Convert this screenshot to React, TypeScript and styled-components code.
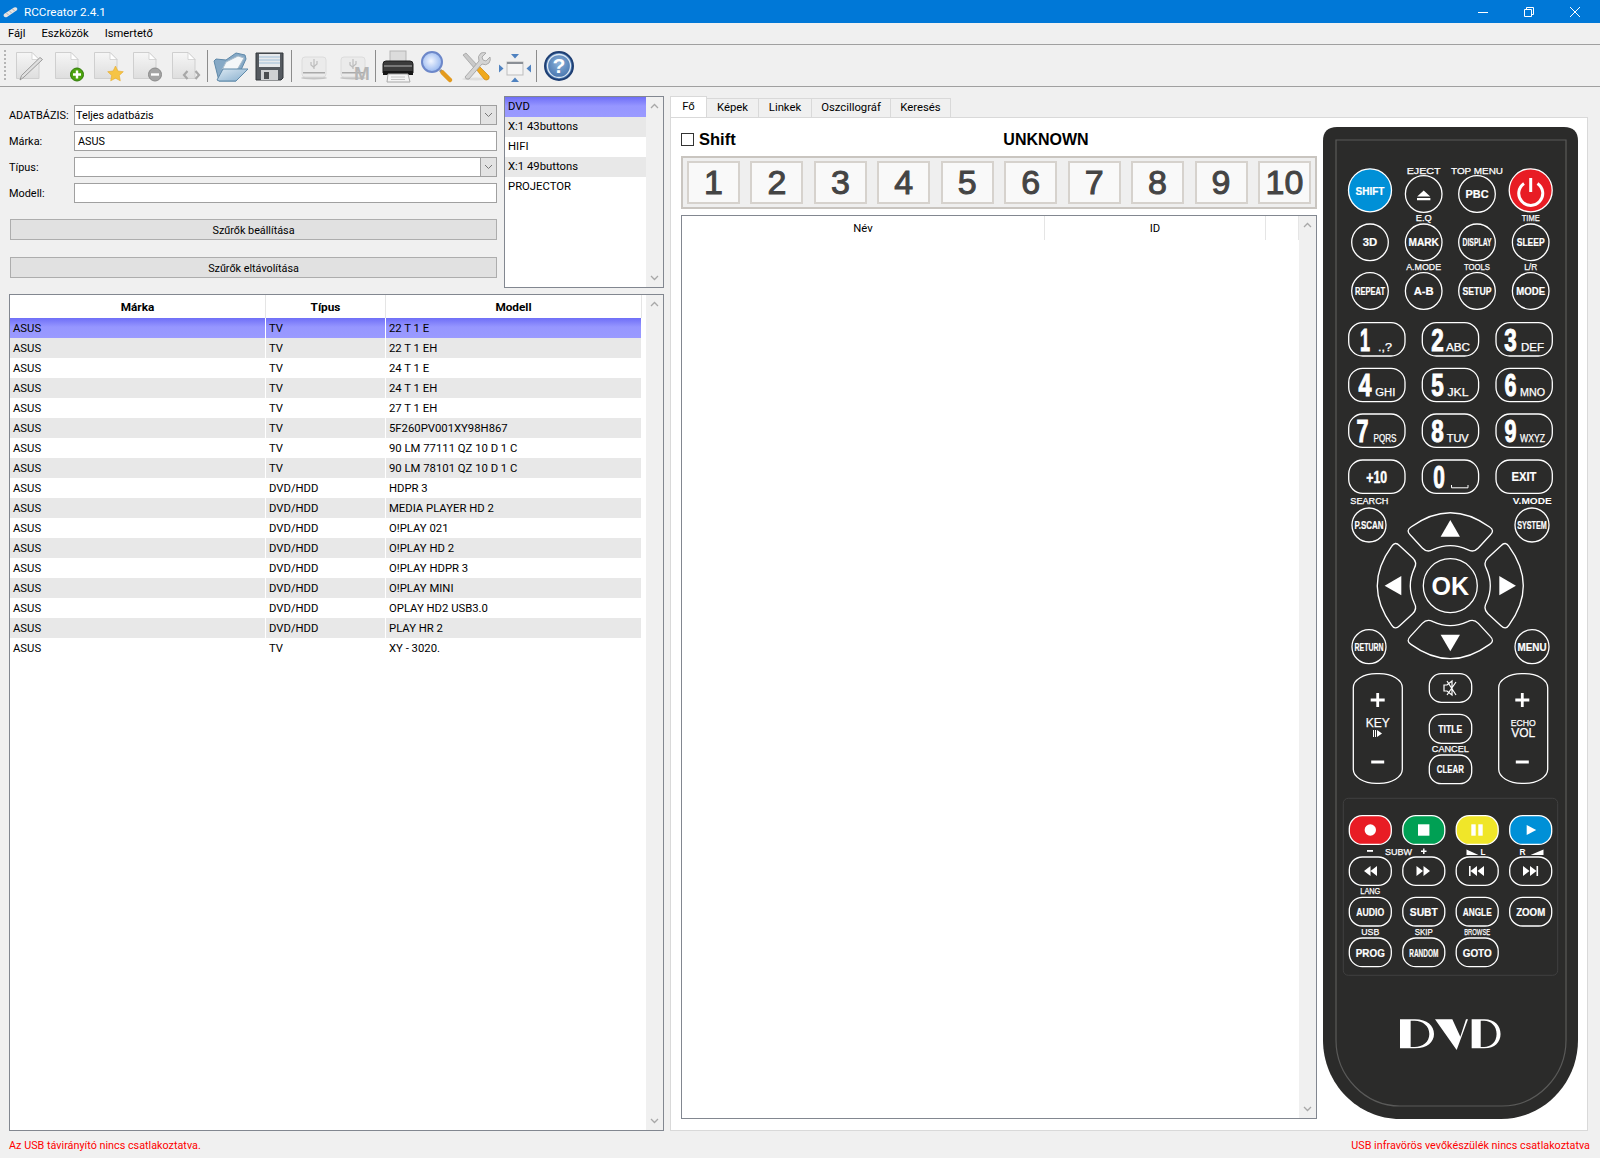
import React from 'react'
import styled, { createGlobalStyle } from 'styled-components'

const Global = createGlobalStyle`
    html, body {
        margin: 0;
        padding: 0;
        background: #f0f0f0;
    }
    * {
        box-sizing: border-box;
    }
`
const Window = styled.div`
    width: 1600px;
    height: 1158px;
    display: flex;
    flex-direction: column;
    overflow: hidden;
    background: #f0f0f0;
    color: #000;
    font-family: Roboto, "Liberation Sans", sans-serif;
    font-size: 11.3px;
`
const TitleBar = styled.div`
    height: 23px;
    flex: none;
    background: #0078d7;
    color: #fff;
    display: flex;
    align-items: center;
    padding: 0 2px 0 3px;
`
const TitleText = styled.span`
    margin-left: 6px;
    font-size: 11.7px;
    flex: 1;
`
const WinButton = styled.div`
    width: 46px;
    height: 23px;
    display: flex;
    align-items: center;
    justify-content: center;
`
const MenuBar = styled.div`
    height: 22px;
    flex: none;
    display: flex;
    align-items: center;
    padding: 0 8px;
    gap: 16px;
    border-bottom: 1px solid #a0a0a0;
    font-size: 11.2px;
`
const ToolBar = styled.div`
    height: 42px;
    flex: none;
    display: flex;
    align-items: center;
    padding-left: 4px;
    border-bottom: 1px solid #a0a0a0;
`
const Grip = styled.div`
    width: 2px;
    height: 32px;
    margin-right: 4px;
    background: repeating-linear-gradient(#b5b5b5 0 2px, transparent 2px 4px);
`
const ToolButton = styled.div`
    width: 39px;
    height: 36px;
    flex: none;
    display: flex;
    align-items: center;
    justify-content: center;
`
const ToolSep = styled.div<{ $m: number }>`
    width: 1px;
    height: 32px;
    flex: none;
    background: #8c8c8c;
    margin: 0 ${p => p.$m}px 0 ${p => p.$m}px;
`
const Main = styled.div`
    flex: 1;
    display: flex;
    min-height: 0;
    padding-top: 9px;
`
const LeftPane = styled.div`
    width: 664px;
    flex: none;
    display: flex;
    flex-direction: column;
    padding: 0 0 3px 9px;
`
const Top = styled.div`
    display: flex;
    gap: 7px;
    height: 192px;
    flex: none;
`
const Form = styled.div`
    width: 488px;
    flex: none;
    padding-top: 9px;
`
const Fields = styled.div`
    display: grid;
    grid-template-columns: 65px 1fr;
    grid-auto-rows: 20px;
    row-gap: 6px;
    align-items: center;
`
const FieldLabel = styled.span`
    font-size: 10.9px;
`
const Input = styled.div`
    height: 20px;
    background: #fff;
    border: 1px solid #a0a0a0;
    display: flex;
    align-items: center;
    padding: 1px 0 0 3px;
    font-size: 10.8px;
    position: relative;
`
const ComboInput = styled(Input)`
    padding: 0 0 0 1px;
`
const ComboArrow = styled.div`
    position: absolute;
    right: 0;
    top: 0;
    bottom: 0;
    width: 16px;
    background: #e3e3e3;
    border-left: 1px solid #a0a0a0;
    display: flex;
    align-items: center;
    justify-content: center;
`
const FilterButton = styled.div<{ $top: number }>`
    height: 21px;
    margin: ${p => p.$top}px 0 0 1px;
    padding-top: 1px;
    background: #e1e1e1;
    border: 1px solid #adadad;
    display: flex;
    align-items: center;
    justify-content: center;
    font-size: 10.8px;
`
const Listing = styled.div`
    flex: 1;
    display: flex;
    background: #fff;
    border: 1px solid #828790;
    min-width: 0;
`
const ListBody = styled.div`
    flex: 1;
`
const ListRow = styled.div<{ $selected?: boolean; $alt?: boolean }>`
    height: 20px;
    padding: 0 0 2px 3px;
    display: flex;
    align-items: center;
    background: ${p => p.$selected ? 'linear-gradient(#6f6ff7, #9696ff 45%, #9a9aff)' : p.$alt ? '#e8e8e8' : '#fff'};
`
const Scroll = styled.div`
    width: 17px;
    flex: none;
    background: #f0f0f0;
    display: flex;
    flex-direction: column;
    justify-content: space-between;
    align-items: center;
    padding: 6px 0;
`
const DataTable = styled.div`
    margin-top: 6px;
    flex: 1;
    display: flex;
    background: #fff;
    border: 1px solid #828790;
    min-height: 0;
`
const TableBody = styled.div`
    flex: 1;
    padding-right: 4px;
`
const HeadRow = styled.div`
    height: 23px;
    display: grid;
    grid-template-columns: 256px 120px 1fr;
`
const HeadCell = styled.div`
    display: flex;
    align-items: center;
    justify-content: center;
    font-weight: bold;
    font-size: 11.8px;
    border-right: 1px solid #e5e5e5;
`
const Row = styled.div<{ $selected?: boolean; $alt?: boolean }>`
    height: 20px;
    display: grid;
    grid-template-columns: 256px 120px 1fr;
    background: ${p => p.$selected ? 'linear-gradient(#6f6ff7, #9696ff 45%, #9a9aff)' : p.$alt ? '#e8e8e8' : '#fff'};
`
const Cell = styled.div`
    display: flex;
    align-items: center;
    padding-left: 3px;
    border-right: 1px solid #fff;
`
const RightPane = styled.div`
    width: 918px;
    margin-left: 6px;
    flex: none;
    display: flex;
    flex-direction: column;
    padding-bottom: 3px;
`
const Tabs = styled.div`
    height: 21px;
    flex: none;
    display: flex;
    align-items: flex-end;
`
const Tab = styled.div<{ $active?: boolean; $w: number }>`
    width: ${p => p.$w}px;
    height: ${p => p.$active ? 21 : 19}px;
    display: flex;
    align-items: center;
    justify-content: center;
    padding-bottom: 1px;
    background: ${p => p.$active ? '#fff' : '#f0f0f0'};
    border: 1px solid #d9d9d9;
    border-bottom: none;
    border-left: ${p => p.$active ? '1px solid #d9d9d9' : 'none'};
`
const Panel = styled.div`
    flex: 1;
    background: #fff;
    border: 1px solid #d9d9d9;
    display: flex;
    min-height: 0;
    padding: 0 0 11px 10px;
`
const Work = styled.div`
    width: 636px;
    flex: none;
    display: flex;
    flex-direction: column;
    padding-top: 11px;
`
const ShiftRow = styled.div`
    height: 21px;
    flex: none;
    display: grid;
    grid-template-columns: 94px 1fr;
    align-items: center;
    font-family: "Liberation Sans", sans-serif;
    font-weight: bold;
    font-size: 16.5px;
`
const ShiftLabel = styled.div`
    display: flex;
    align-items: center;
    gap: 5px;
`
const Check = styled.div`
    width: 13px;
    height: 13px;
    border: 1px solid #333;
    background: #fff;
`
const Unknown = styled.div`
    text-align: center;
    font-size: 16px;
`
const Strip = styled.div`
    height: 53px;
    flex: none;
    margin-top: 6px;
    border: 2px solid #c9c5c0;
    background: #efefef;
    padding: 0 4px;
    display: flex;
    align-items: center;
    justify-content: space-between;
`
const KeyButton = styled.div`
    width: 53px;
    height: 43px;
    padding-bottom: 1px;
    background: #f9f9f9;
    border: 2px solid #d6d2cd;
    display: flex;
    align-items: center;
    justify-content: center;
    font-family: "Liberation Sans", sans-serif;
    font-size: 34px;
    -webkit-text-stroke: 1px #444;
    color: #444;
`
const KeyTable = styled.div`
    flex: 1;
    margin-top: 6px;
    display: flex;
    border: 1px solid #828790;
    min-height: 0;
`
const KeyBody = styled.div`
    flex: 1;
    min-width: 0;
`
const KeyHead = styled.div`
    height: 24px;
    display: grid;
    grid-template-columns: 363px 221px 1fr;
`
const KeyHeadCell = styled.div`
    display: flex;
    align-items: center;
    justify-content: center;
    border-right: 1px solid #e5e5e5;
`
const RemoteWrap = styled.div`
    margin: 9px 0 0 6px;
    flex: none;
`
const Status = styled.div`
    height: 24px;
    flex: none;
    display: flex;
    align-items: center;
    justify-content: space-between;
    padding: 0 10px 2px 9px;
    color: #f00;
    font-size: 10.8px;
`

const Chevron = ({ down }: { down?: boolean }) => (
    <svg width="9" height="6" viewBox="0 0 9 6">
        <path d={down ? 'M1 1l3.500 3.500L8 1' : 'M1 5l3.500-3.500L8 5'} fill="none" stroke="#a8a8a8" strokeWidth="1.300" />
    </svg>
)
const ComboChevron = () => (
    <svg width="9" height="6" viewBox="0 0 9 6">
        <path d="M1 1l3.500 3.500L8 1" fill="none" stroke="#777" strokeWidth="1" />
    </svg>
)
const ScrollBar = () => <Scroll><Chevron /><Chevron down /></Scroll>

const Doc = ({ children }: { children?: React.ReactNode }) => (
    <svg width="32" height="32" viewBox="0 0 32 32" overflow="visible">
        <defs>
            <linearGradient id="page" x1="0" y1="0" x2="0" y2="1">
                <stop offset="0" stopColor="#f6f6f6" />
                <stop offset="1" stopColor="#dedede" />
            </linearGradient>
        </defs>
        <path d="M2.500 2.500H18L25 9.500V28.500H2.500Z" fill="url(#page)" stroke="#cfcfcf" />
        <path d="M18 2.500V9.500H25Z" fill="#fff" stroke="#c8c8c8" strokeWidth=".7" />
        {children}
    </svg>
)
const Plain = ({ children, w = 32 }: { children: React.ReactNode; w?: number }) => (
    <svg width={w} height="32" viewBox={`0 0 ${w} 32`} overflow="visible">{children}</svg>
)
const UsbIcon = ({ m }: { m?: boolean }) => (
    <Plain>
        <ellipse cx="15" cy="28" rx="13" ry="1.500" fill="#c4c4c4" />
        <rect x="3" y="7" width="24" height="20" rx="3" fill="#ebebeb" stroke="#dcdcdc" />
        <rect x="4" y="22" width="22" height="1.500" fill="#a9a9a9" />
        <path d="M15 9v10M12 12v3l3 2.500M18 11v3l-3 2.500" fill="none" stroke="#bdbdbd" strokeWidth="1.200" />
        {m && <text x="24" y="30" textAnchor="middle" fontFamily="Liberation Sans" fontWeight="bold" fontSize="19" fill="#b5b5b5">M</text>}
    </Plain>
)

const tools: (React.ReactNode | number)[] = [
    <Doc key="n"><path d="M28.500 9.500L10 27l-4 3 1.500-4.500L26 7.500Z" fill="#e0e0e0" stroke="#9a9a9a" /></Doc>,
    <Doc key="a"><circle cx="24" cy="24.500" r="6.500" fill="#4da30f" stroke="#2f7a08" /><path d="M24 20.500v8M20 24.500h8" stroke="#fff" strokeWidth="2.400" /></Doc>,
    <Doc key="f"><path d="M23.500 16l2.400 5 5.400.7-4 3.700 1 5.400-4.800-2.600-4.800 2.600 1-5.400-4-3.700 5.400-.7Z" fill="#f6c445" stroke="#e6a92c" strokeWidth=".6" /></Doc>,
    <Doc key="r"><circle cx="24" cy="24.500" r="6.500" fill="#a4a4a4" stroke="#8a8a8a" /><path d="M20 24.500h8" stroke="#fff" strokeWidth="2.400" /></Doc>,
    <Doc key="c"><path d="M17.500 21l-3.500 4 3.500 4M25.500 21l3.500 4-3.500 4" fill="none" stroke="#a8a8a8" strokeWidth="2.200" /></Doc>,
    2,
    <Plain key="o">
        <defs>
            <linearGradient id="flap" x1="0" y1="0" x2="1" y2="1">
                <stop offset="0" stopColor="#dce9f3" />
                <stop offset="1" stopColor="#86aecd" />
            </linearGradient>
        </defs>
        <path d="M0 11l2-2 10 1L22 3l9 2 1 4-10 22H5Z" fill="#86a9c6" stroke="#5f89a9" />
        <path d="M12 12L24 6l6 2-7 12H8Z" fill="#f4f7f9" stroke="#a9bdcc" />
        <path d="M3 30L9 19h25L22 31H5Z" fill="url(#flap)" stroke="#5f89a9" />
    </Plain>,
    <Plain key="s">
        <path d="M3 3h27v25l-2 2H3Z" fill="#555a60" stroke="#33373b" />
        <rect x="6" y="4" width="21" height="13" fill="#e6e9ec" />
        <path d="M6 7h21M6 10h21M6 13h21" stroke="#9fc0d8" strokeWidth="1.200" />
        <rect x="8" y="20" width="17" height="10" fill="#cfd1d3" />
        <rect x="11" y="22" width="5" height="7" fill="#4a4d50" />
    </Plain>,
    3,
    <UsbIcon key="u" />,
    <UsbIcon key="m" m />,
    2,
    <Plain key="p">
        <rect x="8" y="1" width="16" height="12" fill="#dcdcdc" stroke="#b5b5b5" />
        <path d="M1 14q0-3 3-3h24q3 0 3 3v9H1Z" fill="#3b3b3b" stroke="#1e1e1e" />
        <rect x="2" y="15" width="28" height="2" fill="#777" />
        <rect x="1" y="21" width="30" height="4" fill="#161616" />
        <path d="M6 24h20l2 8H5Z" fill="#f4f4f4" stroke="#a8a8a8" />
        <path d="M9 27h14M9 29.500h14" stroke="#c4c4c4" />
    </Plain>,
    <Plain key="z">
        <defs>
            <radialGradient id="lens" cx=".45" cy=".45" r=".6">
                <stop offset="0" stopColor="#f2f6ff" />
                <stop offset="1" stopColor="#8fb2ee" />
            </radialGradient>
        </defs>
        <circle cx="11" cy="12" r="10" fill="url(#lens)" stroke="#6c87c9" strokeWidth="2" />
        <path d="M19 20l2 2" stroke="#8f8f8f" strokeWidth="3" />
        <path d="M21.500 22.500L29 30" stroke="#e39a1e" strokeWidth="4.500" strokeLinecap="round" />
    </Plain>,
    <Plain key="t">
        <ellipse cx="16" cy="29" rx="14" ry="1.500" fill="#dedede" />
        <path d="M3 5l3-2 12 13-3 3Z" fill="#c9c9c9" stroke="#9a9a9a" strokeWidth=".7" />
        <path d="M16 19l3-3 10 10q1 3-2 4-2 0-3-1Z" fill="#f0a91c" stroke="#c98510" strokeWidth=".7" />
        <path d="M5 27L19 11q-2-5 2-8 3-1 5 0l-4 4 1 3 3 1 4-4q1 3-1 6-3 3-7 1L9 29q-3 1-4-2Z" fill="#d4d4d4" stroke="#9d9d9d" strokeWidth=".8" />
    </Plain>,
    <Plain key="w">
        <rect x="8" y="12" width="16" height="13" fill="#f4f4f4" stroke="#bdbdbd" />
        <rect x="8" y="12" width="16" height="2" fill="#8a8f96" />
        <path d="M12 4h8l-4 4.500ZM12 32h8l-4-4.500ZM0 14.500v8l4.500-4ZM32 14.500v8l-4.500-4Z" fill="#4f82c0" />
    </Plain>,
    2,
    <Plain key="h">
        <defs>
            <radialGradient id="help" cx=".5" cy=".4" r=".7">
                <stop offset="0" stopColor="#8cb2da" />
                <stop offset="1" stopColor="#2f5f9e" />
            </radialGradient>
        </defs>
        <circle cx="16" cy="16" r="14" fill="url(#help)" stroke="#1f3f73" strokeWidth="2" />
        <circle cx="16" cy="16" r="11.500" fill="none" stroke="#dfe9f3" strokeWidth="1.300" />
        <text x="16" y="23" textAnchor="middle" fontFamily="Liberation Sans" fontWeight="bold" fontSize="21" fill="#fff">?</text>
    </Plain>,
]

type Txt = [number, number, string, number, number, boolean?]

// screen coordinates, measured from the picture: x, baseline, text, width, size, regular
const labels: Txt[] = [
    [1423.700, 173.500, 'EJECT', 34, 9.500, true], [1477, 173.500, 'TOP MENU', 52, 9.500, true], [1423.700, 221, 'E.Q', 16, 9.500, true],
    [1530.700, 221, 'TIME', 18, 9.500, true], [1423.700, 270, 'A.MODE', 35, 9.500, true], [1477, 270, 'TOOLS', 26, 9.500, true],
    [1530.700, 270, 'L/R', 13, 9.500, true], [1369.300, 504, 'SEARCH', 38, 9.500, true], [1532.300, 504, 'V.MODE', 39, 9.500],
    [1450.300, 751.500, 'CANCEL', 37, 9.500, true], [1398.500, 854.500, 'SUBW', 27, 9.500, true], [1483, 854.500, 'L', 5, 9.500],
    [1522.500, 854.500, 'R', 6, 9.500], [1370.300, 894, 'LANG', 20, 9, true], [1370.300, 935, 'USB', 18, 9.500, true],
    [1423.800, 935, 'SKIP', 18, 9.500, true], [1477.200, 935, 'BROWSE', 26, 9, true],
    [1377.700, 727, 'KEY', 24, 12.500, true], [1523.300, 726, 'ECHO', 25, 9.500, true], [1523.300, 737, 'VOL', 24, 13, true],
]
const circles: [number, number, number, string, number][] = [
    [1423.700, 194, 18.300, '', 0], [1477, 194, 18.300, 'PBC', 23], [1370, 242.300, 18.300, '3D', 14.500], [1423.700, 242.300, 18.300, 'MARK', 30.500],
    [1477, 242.300, 18.300, 'DISPLAY', 29], [1530.700, 242.300, 18.300, 'SLEEP', 28], [1370, 291, 18.300, 'REPEAT', 30], [1423.700, 291, 18.300, 'A-B', 20],
    [1477, 291, 18.300, 'SETUP', 29], [1530.700, 291, 18.300, 'MODE', 28.700], [1369, 525, 17, 'P.SCAN', 29], [1532, 525, 17, 'SYSTEM', 29.500],
    [1369, 646.700, 17, 'RETURN', 29], [1532, 646.700, 17, 'MENU', 29],
]
// column, row, digit, digit x, digit width, letters, letters width, letters x
const pads: [number, string, number, number, string, number, number][] = [
    [0, '1', 1365, 10, '.,?', 14, 1385], [0, '2', 1437.500, 12.500, 'ABC', 24, 1458], [0, '3', 1510.500, 12.500, 'DEF', 23, 1532.500],
    [1, '4', 1365, 13, 'GHI', 20, 1385.300], [1, '5', 1437.500, 12.500, 'JKL', 21, 1458], [1, '6', 1510.500, 12, 'MNO', 25, 1532.500],
    [2, '7', 1362.500, 12, 'PQRS', 23, 1385], [2, '8', 1437.500, 12.500, 'TUV', 22, 1457.700], [2, '9', 1510.500, 12, 'WXYZ', 25, 1532.500],
]
const padX = [1348.700, 1422.300, 1496]
const padY = [322.700, 368.300, 414, 460]
const smallCols = [1370.300, 1423.800, 1477.200, 1530.700]
const colours = ['#e81c24', '#00a054', '#f0e629', '#0090d7']
const textKeys: [number, number, string, number][] = [
    [0, 916, 'AUDIO', 28], [1, 916, 'SUBT', 28], [2, 916, 'ANGLE', 29], [3, 916, 'ZOOM', 29],
    [0, 956.700, 'PROG', 29], [1, 956.700, 'RANDOM', 29], [2, 956.700, 'GOTO', 29],
]

const RemoteText = styled.text<{ $heavy?: number }>`
    font-family: "Liberation Sans", Arial, sans-serif;
    fill: #fff;
    stroke: #fff;
    stroke-width: ${p => p.$heavy || 0}px;
    text-anchor: middle;
`
const Fit = ({ x, y, w, size, regular, heavy, children }: { x: number; y: number; w: number; size: number; regular?: boolean; heavy?: number; children: string }) => (
    <RemoteText x={x} y={y} textLength={w} lengthAdjust="spacingAndGlyphs" fontSize={size} fontWeight={regular ? 'normal' : 'bold'} $heavy={heavy ?? (regular ? 0.25 : 0)}>{children}</RemoteText>
)

const dpadUp = 'M-118-176Q0-262 118-176Q134-166 120-152L84-113Q70-98 52-108Q0-132-52-108Q-70-98-84-113L-120-152Q-134-166-118-176Z'
const DVD_D = 'M0 0H32V87H0ZM32 0H45C82 0 102 20 102 44C102 68 82 87 45 87H32V83H44C68 83 88 68 88 44C88 20 68 4 44 4H32Z'

const Remote = () => (
    <svg width="255" height="992" viewBox="1323 127 255 992" style={{ display: 'block' }}>
        <path d="M1337 127H1564Q1578 127 1578 141V1040C1578 1084 1543 1119 1501 1119H1400C1358 1119 1323 1084 1323 1040V141Q1323 127 1337 127Z" fill="#2b2b2a" />
        <path d="M1336 140H1566V1040C1566 1076 1537 1106 1502 1106H1400C1365 1106 1336 1076 1336 1040Z" fill="none" stroke="#5a5a59" strokeWidth="1.200" />
        <rect x="1343.300" y="798.300" width="214.400" height="177" rx="5" fill="none" stroke="#404040" />

        <g stroke="#fff" strokeWidth="1.300" fill="none">
            <circle cx="1370" cy="190.300" r="21.500" fill="#0090d7" />
            <circle cx="1530.700" cy="190.300" r="21.500" fill="#e81c24" />
            {circles.map(([x, y, r], i) => <circle key={i} cx={x} cy={y} r={r} />)}
            {padY.map(y => padX.map(x => <rect key={`${x}${y}`} x={x} y={y} width="56.300" height="33.300" rx="14" />))}
            <rect x="1353.300" y="673.700" width="49" height="109.600" rx="23" ry="14" />
            <rect x="1498.700" y="673.700" width="49" height="109.600" rx="23" ry="14" />
            <rect x="1429.300" y="673.700" width="42.400" height="28.600" rx="12" />
            <rect x="1429.300" y="714.300" width="42.400" height="29" rx="12" />
            <rect x="1429.300" y="755" width="42.400" height="28.700" rx="12" />
            <circle cx="1450.300" cy="585.700" r="27" />
            <g transform="translate(1450.300 585.700) scale(.3333)" strokeWidth="4">
                {[0, 90, 180, 270].map(a => (
                    <g key={a} transform={`rotate(${a})`}>
                        <path d={dpadUp} />
                        <path d="M0-197L29-147H-29Z" fill="#fff" stroke="none" />
                    </g>
                ))}
            </g>
            {smallCols.map((x, i) => (
                <React.Fragment key={x}>
                    <rect x={x - 21} y="815.700" width="42" height="28.700" rx="13" fill={colours[i]} />
                    <rect x={x - 21} y="857" width="42" height="28.300" rx="13" />
                    <rect x={x - 21} y="897.300" width="42" height="28.700" rx="13" />
                    {i < 3 && <rect x={x - 21} y="938" width="42" height="28.700" rx="13" />}
                </React.Fragment>
            ))}
        </g>
        <Fit x={1370} y={194.500} w={29} size={11.500} heavy={0.2}>SHIFT</Fit>
        <path d="M1524 183.500a12 12 0 1 0 13.500 0" fill="none" stroke="#fff" strokeWidth="3" />
        <path d="M1530.700 178v14" stroke="#fff" strokeWidth="3" />
        <path d="M1423.700 190.500l6.500 6h-13Z M1417 198h13.400v2.300H1417Z" fill="#fff" />

        {circles.filter(c => c[3]).map(([x, y, , t, w]) => <Fit key={t} x={x} y={y + 4} w={w} size={11} heavy={0.2}>{t}</Fit>)}
        {labels.map(([x, y, t, w, s, r]) => <Fit key={t} x={x} y={y} w={w} size={s} regular={r}>{t}</Fit>)}
        {pads.map(([r, d, dx, dw, s, sw, sx]) => (
            <React.Fragment key={d}>
                <Fit x={dx} y={padY[r] + 28} w={dw} size={32} heavy={1}>{d}</Fit>
                <Fit x={sx} y={padY[r] + 28} w={sw} size={10} regular>{s}</Fit>
            </React.Fragment>
        ))}
        <Fit x={1376.700} y={482.700} w={20.700} size={16} heavy={0.5}>+10</Fit>
        <Fit x={1439} y={488} w={11.600} size={32} heavy={1}>0</Fit>
        <path d="M1451.500 485v2.800h16.500V485" fill="none" stroke="#fff" strokeWidth="1" />
        <Fit x={1524} y={481} w={25} size={12.500} heavy={0.2}>EXIT</Fit>
        <RemoteText x="1450.300" y="594.500" fontSize="25" fontWeight="bold">OK</RemoteText>

        <path d="M1377.700 693v14M1370.700 700h14M1371.200 762h13M1522.300 693v14M1515.300 700h14M1515.800 762h13" stroke="#fff" strokeWidth="2.800" />
        <path d="M1373.500 730v7M1375.500 730v7" stroke="#fff" strokeWidth="1" />
        <path d="M1377 730l5 3.500-5 3.500Z" fill="#fff" />
        <path d="M1444 685v6h3l5 4v-14l-5 4h-3ZM1447 681l9 14M1456 682l-9 13" fill="none" stroke="#fff" strokeWidth="1.200" />
        <Fit x={1450.300} y={732.500} w={24} size={11} heavy={0.2}>TITLE</Fit>
        <Fit x={1450.300} y={773} w={27} size={11} heavy={0.2}>CLEAR</Fit>

        <g fill="#fff">
            <circle cx="1370.300" cy="830" r="5.700" />
            <rect x="1418" y="824.300" width="11.400" height="11.400" />
            <rect x="1471.300" y="824.300" width="4.400" height="11.400" />
            <rect x="1478.300" y="824.300" width="4.400" height="11.400" />
            <path d="M1526.700 825l9.500 5-9.500 5Z" />
            <rect x="1367" y="850" width="6" height="1.800" />
            <path d="M1421 851.200h5.500M1423.800 848.500v5.500" stroke="#fff" strokeWidth="1.500" />
            <path d="M1466.500 849.500l12 5.500h-12ZM1530.500 855l13-5.500v5.500Z" />
            <path d="M1370.500 866v10l-6.500-5ZM1377 866v10l-6.500-5Z" />
            <path d="M1416.500 866v10l6.500-5ZM1423.500 866v10l6.500-5Z" />
            <path d="M1477 866v10l-6.500-5ZM1484 866v10l-6.500-5ZM1469 866h1.600v10H1469Z" />
            <path d="M1523 866v10l6.500-5ZM1530 866v10l6.500-5ZM1536.500 866h1.600v10h-1.600Z" />
        </g>
        {textKeys.map(([c, y, t, w]) => <Fit key={t} x={smallCols[c]} y={y} w={w} size={11} heavy={0.2}>{t}</Fit>)}

        <g transform="translate(1400 1019.300) scale(.3333)" fill="#fff">
            <path d={DVD_D} />
            <path d="M105 0H157L181 52L198 0H204L170 92Z" />
            <path d={DVD_D} transform="translate(215 0) scale(.85 1)" />
        </g>
    </svg>
)

const rows: [string, string][] = [
    ['TV', '22 T 1 E'], ['TV', '22 T 1 EH'], ['TV', '24 T 1 E'], ['TV', '24 T 1 EH'], ['TV', '27 T 1 EH'], ['TV', '5F260PV001XY98H867'],
    ['TV', '90 LM 77111 QZ 10 D 1 C'], ['TV', '90 LM 78101 QZ 10 D 1 C'], ['DVD/HDD', 'HDPR 3'], ['DVD/HDD', 'MEDIA PLAYER HD 2'],
    ['DVD/HDD', 'O!PLAY 021'], ['DVD/HDD', 'O!PLAY HD 2'], ['DVD/HDD', 'O!PLAY HDPR 3'], ['DVD/HDD', 'O!PLAY MINI'],
    ['DVD/HDD', 'OPLAY HD2 USB3.0'], ['DVD/HDD', 'PLAY HR 2'], ['TV', 'XY - 3020.'],
]
const devices = ['DVD', 'X:1 43buttons', 'HIFI', 'X:1 49buttons', 'PROJECTOR']
const tabs: [string, number][] = [['Fő', 37], ['Képek', 52], ['Linkek', 53], ['Oszcillográf', 79], ['Keresés', 60]]

export default function App() {
    return <Window>
        <Global />
        <TitleBar>
            <svg width="15" height="12" viewBox="0 0 15 12">
                <path d="M1 8L11 1.500q2-.8 3 .5t-.5 2.500L4 11q-2 .8-3-.5T1 8Z" fill="#e4e4e4" />
                <path d="M4 7.500l1 1M7 5.500l1 1M10 3.500l1 1" stroke="#777" />
            </svg>
            <TitleText>RCCreator 2.4.1</TitleText>
            <WinButton><svg width="10" height="10"><path d="M0 5.500h10" stroke="#fff" /></svg></WinButton>
            <WinButton>
                <svg width="10" height="10"><path d="M.5 2.500h7v7h-7ZM2.500 2.500v-2h7v7h-2" fill="none" stroke="#fff" /></svg>
            </WinButton>
            <WinButton><svg width="10" height="10"><path d="M0 0l10 10M10 0L0 10" stroke="#fff" /></svg></WinButton>
        </TitleBar>
        <MenuBar><span>Fájl</span><span>Eszközök</span><span>Ismertető</span></MenuBar>
        <ToolBar>
            <Grip />
            {tools.map((t, i) => typeof t === 'number' ? <ToolSep key={i} $m={t} /> : <ToolButton key={i}>{t}</ToolButton>)}
        </ToolBar>
        <Main>
            <LeftPane>
                <Top>
                    <Form>
                        <Fields>
                            <FieldLabel>ADATBÁZIS:</FieldLabel>
                            <ComboInput>Teljes adatbázis<ComboArrow><ComboChevron /></ComboArrow></ComboInput>
                            <FieldLabel>Márka:</FieldLabel>
                            <Input>ASUS</Input>
                            <FieldLabel>Típus:</FieldLabel>
                            <ComboInput><ComboArrow><ComboChevron /></ComboArrow></ComboInput>
                            <FieldLabel>Modell:</FieldLabel>
                            <Input />
                        </Fields>
                        <FilterButton $top={16}>Szűrők beállítása</FilterButton>
                        <FilterButton $top={17}>Szűrők eltávolítása</FilterButton>
                    </Form>
                    <Listing>
                        <ListBody>
                            {devices.map((d, i) => <ListRow key={d} $selected={i === 0} $alt={i % 2 === 1}>{d}</ListRow>)}
                        </ListBody>
                        <ScrollBar />
                    </Listing>
                </Top>
                <DataTable>
                    <TableBody>
                        <HeadRow><HeadCell>Márka</HeadCell><HeadCell>Típus</HeadCell><HeadCell>Modell</HeadCell></HeadRow>
                        {rows.map(([type, model], i) => <Row key={model} $selected={i === 0} $alt={i % 2 === 1}>
                            <Cell>ASUS</Cell><Cell>{type}</Cell><Cell>{model}</Cell>
                        </Row>)}
                    </TableBody>
                    <ScrollBar />
                </DataTable>
            </LeftPane>
            <RightPane>
                <Tabs>
                    {tabs.map(([t, w], i) => <Tab key={t} $w={w} $active={i === 0}>{t}</Tab>)}
                </Tabs>
                <Panel>
                    <Work>
                        <ShiftRow>
                            <ShiftLabel><Check />Shift</ShiftLabel>
                            <Unknown>UNKNOWN</Unknown>
                        </ShiftRow>
                        <Strip>
                            {[1, 2, 3, 4, 5, 6, 7, 8, 9, 10].map(n => <KeyButton key={n}>{n}</KeyButton>)}
                        </Strip>
                        <KeyTable>
                            <KeyBody>
                                <KeyHead><KeyHeadCell>Név</KeyHeadCell><KeyHeadCell>ID</KeyHeadCell><KeyHeadCell /></KeyHead>
                            </KeyBody>
                            <ScrollBar />
                        </KeyTable>
                    </Work>
                    <RemoteWrap><Remote /></RemoteWrap>
                </Panel>
            </RightPane>
        </Main>
        <Status>
            <span>Az USB távirányító nincs csatlakoztatva.</span>
            <span>USB infravörös vevőkészülék nincs csatlakoztatva</span>
        </Status>
    </Window>
}
